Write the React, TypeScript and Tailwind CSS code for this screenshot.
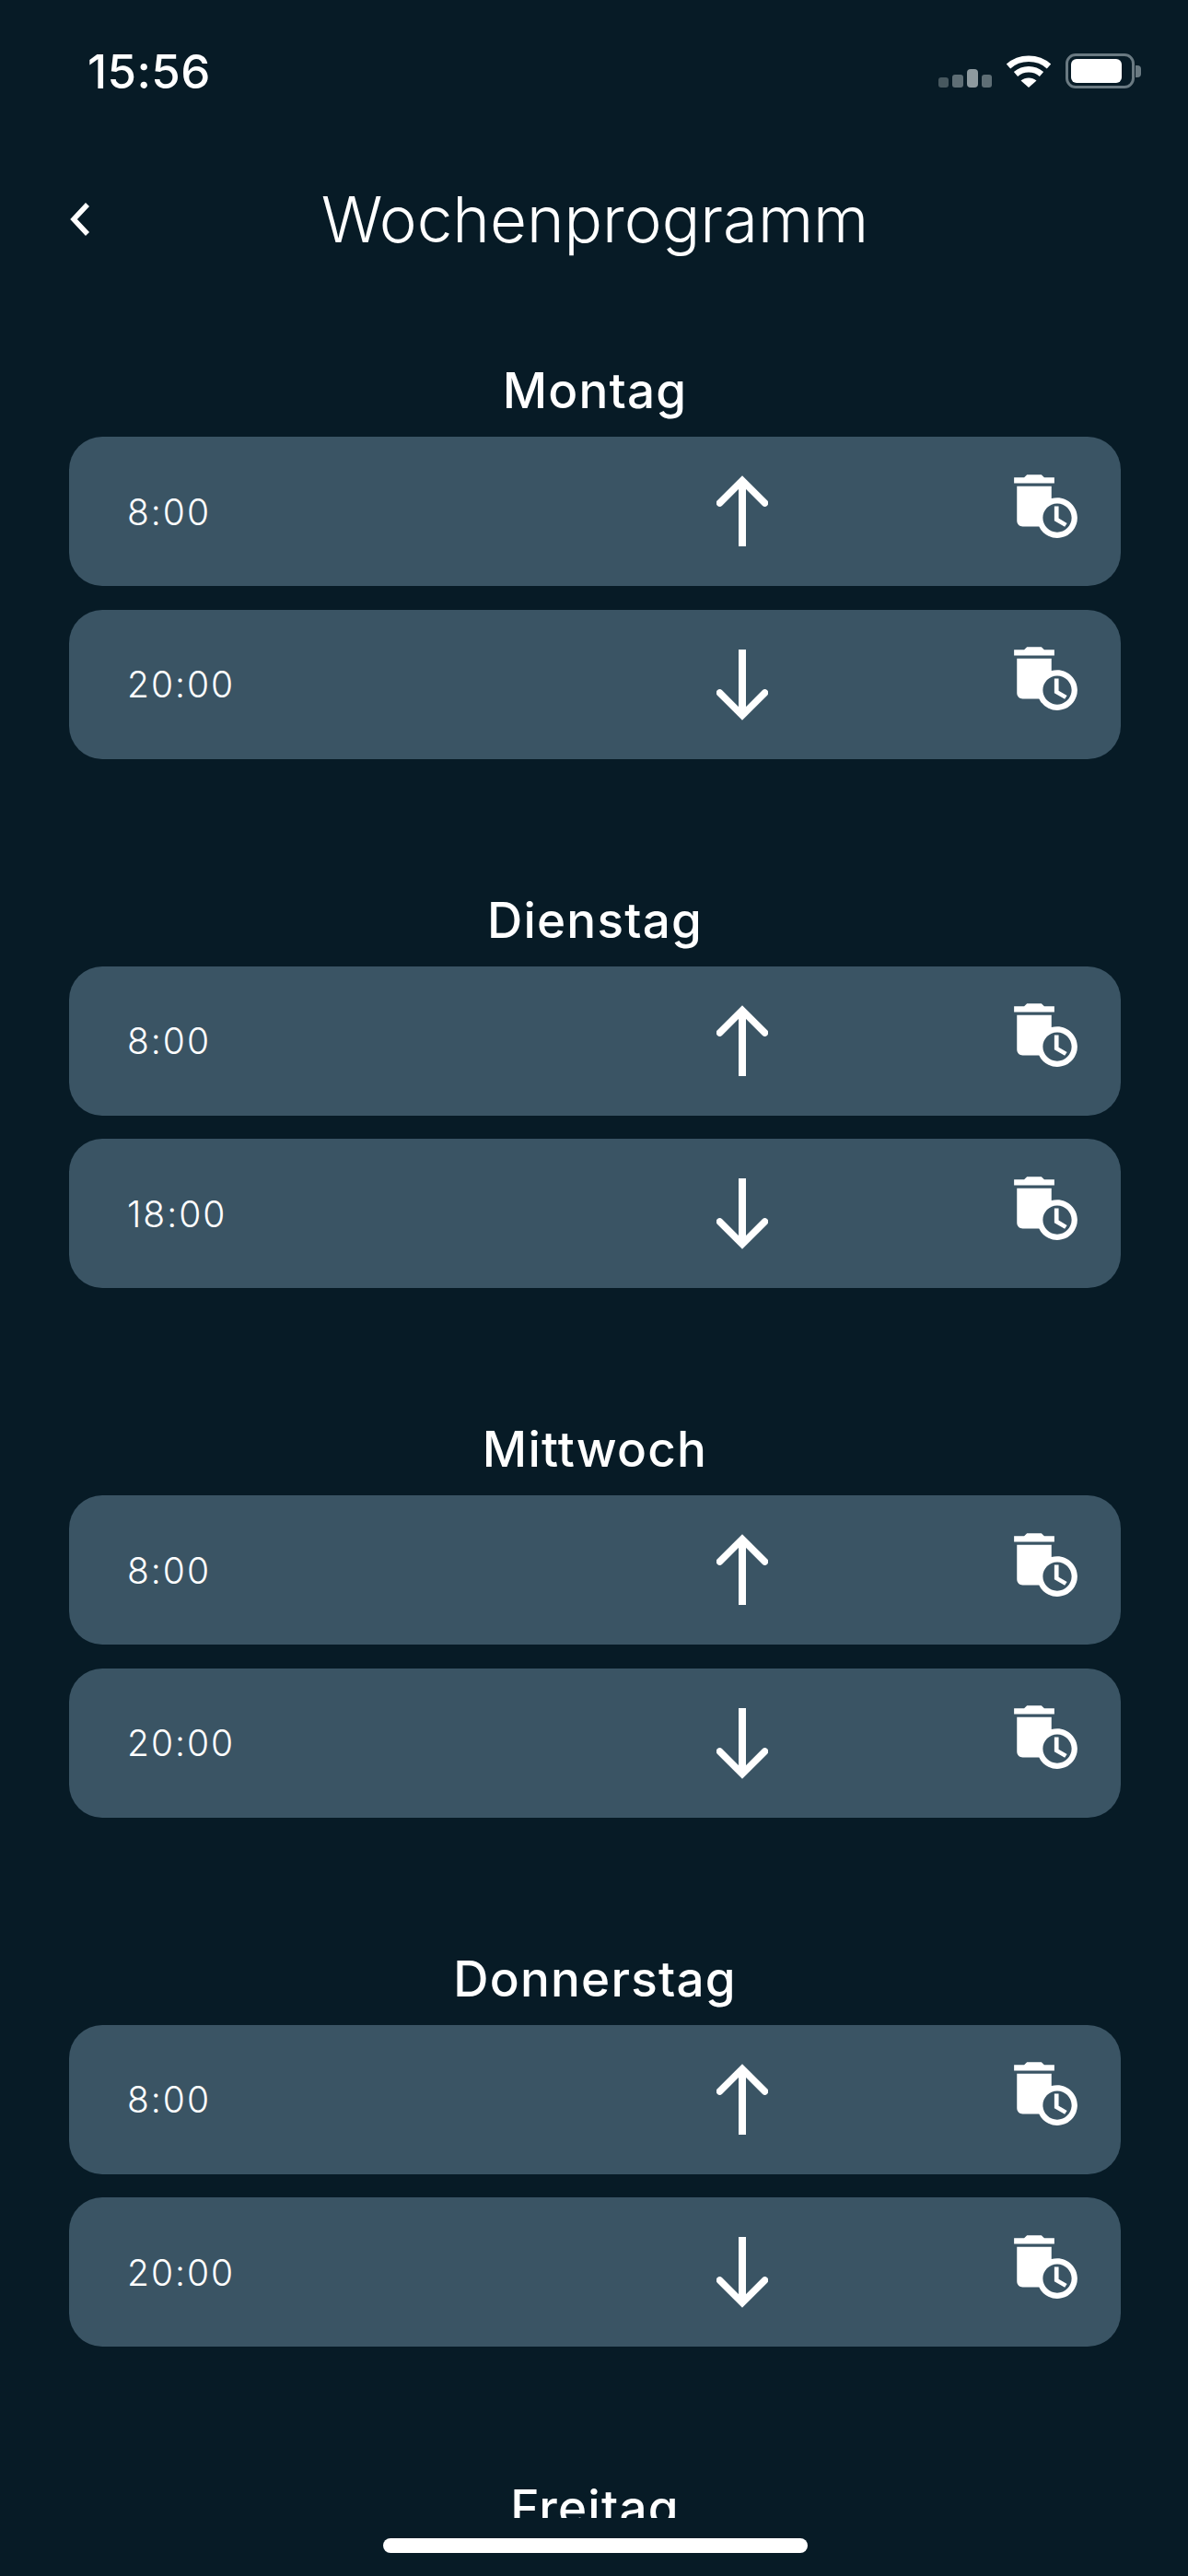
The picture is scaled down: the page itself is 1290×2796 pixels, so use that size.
import React from 'react';
import { MdAutoDelete } from 'react-icons/md';

const days = [
  { name: 'Montag', times: ['8:00', '20:00'] },
  { name: 'Dienstag', times: ['8:00', '18:00'] },
  { name: 'Mittwoch', times: ['8:00', '20:00'] },
  { name: 'Donnerstag', times: ['8:00', '20:00'] },
  { name: 'Freitag', times: [] as string[] },
];

const Arrow = ({ down }: { down: boolean }) => (
  <svg viewBox="0 0 56 78" className={`w-[56px] h-[78px] shrink-0 ${down ? 'rotate-180' : ''}`} fill="none" stroke="white">
    <path d="M28 6V77" strokeWidth="8" />
    <path d="M3.5 30L28 5.5L52.5 30" strokeWidth="7.5" strokeLinecap="round" />
  </svg>
);

const StatusIcons = () => (
  <div className="flex items-end">
    {/* signal */}
    <div className="flex items-end gap-[4px] mr-[15px] mb-[1px]">
      <div className="w-[11px] h-[11px] rounded-[3px] bg-[#47585f]" />
      <div className="w-[12px] h-[14px] rounded-[3px] bg-[#5e6e75]" />
      <div className="w-[12px] h-[20px] rounded-[4px] bg-[#8e9a9f]" />
      <div className="w-[11px] h-[14px] rounded-[3px] bg-[#5e6e75]" />
    </div>
    {/* wifi */}
    <svg viewBox="0 0 50 38" className="w-[50px] h-[38px] mr-[15px]" fill="none" stroke="white" strokeWidth="6.5">
      <path d="M3 14C15 3 35 3 47 14" />
      <path d="M11 22.5C19 15.5 31 15.5 39 22.5" />
      <path d="M25 37L16.5 29.5C21.5 25.5 28.5 25.5 33.5 29.5Z" fill="white" stroke="none" />
    </svg>
    {/* battery */}
    <div className="flex items-center">
      <div className="w-[75px] h-[38px] rounded-[11px] border-[3px] border-[#6a7a82] p-[3px]">
        <div className="h-full rounded-[6px] bg-white w-[55px]" />
      </div>
      <div className="w-[6px] h-[13px] ml-[1px] rounded-r-[4px] bg-[#6a7a82]" />
    </div>
  </div>
);

const TimeRow = ({ time, index }: { time: string; index: number }) => (
  <div className="h-[162px] rounded-[36px] bg-[#3a5464] flex items-center pl-[63px]">
    <div className="w-[640px] pt-[2px] text-[39px] font-light tracking-[2px] text-white">{time}</div>
    <Arrow down={index === 1} />
    <div className="ml-[264px] mb-[12px]">
      <MdAutoDelete size={75} color="white" />
    </div>
  </div>
);

export default function App() {
  return (
    <div className="relative w-[1290px] h-[2796px] bg-[#071b26] overflow-hidden font-['Inter',sans-serif] text-white">
      {/* status bar */}
      <div className="h-[154px] pt-[48px] pl-[95px] pr-[51px] flex items-start justify-between">
        <div className="text-[51px] leading-[59px] font-medium tracking-[0.4px]">15:56</div>
        <div className="pt-[10px]">
          <StatusIcons />
        </div>
      </div>

      {/* header */}
      <div className="relative h-[170px]">
        <svg viewBox="0 0 24 38" className="absolute left-[75px] top-[65px] w-[24px] h-[38px]" fill="none" stroke="white" strokeWidth="5.5">
          <path d="M20 3L5 19L20 35" />
        </svg>
        <div className="text-center text-[69px] leading-[84px] font-light pt-[42px] pl-[2px]">Wochenprogramm</div>
      </div>

      {/* week list */}
      <div className="h-[2409px] overflow-hidden pl-[75px] pr-[73px] flex flex-col">
        {days.map((day) => (
          <div key={day.name} className="shrink-0 h-[574.5px]">
            <div className="h-[150px] pt-[69px] text-center text-[53px] leading-[62px] font-medium tracking-[1.2px]">{day.name}</div>
            <div className="flex flex-col gap-[25.5px]">
              {day.times.map((t, i) => (
                <TimeRow key={i} time={t} index={i} />
              ))}
            </div>
          </div>
        ))}
      </div>

      {/* home indicator */}
      <div className="absolute left-[416px] top-[2755px] w-[461px] h-[16px] rounded-full bg-white" />
    </div>
  );
}
